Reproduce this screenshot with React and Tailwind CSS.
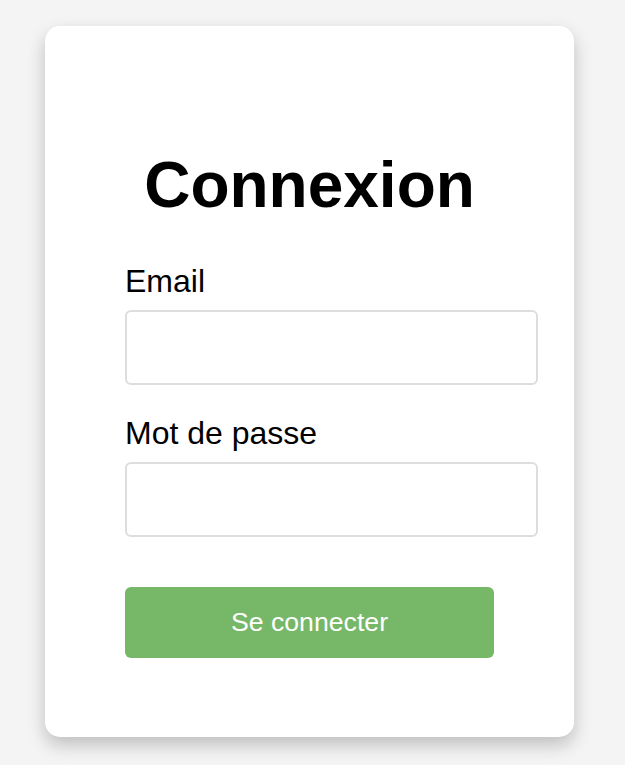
export default function App() {
  return (
    <div className="min-h-screen bg-[#f4f4f4] pt-[26px] pl-[45px] font-['Liberation_Sans',Arial,sans-serif]">
      <div className="w-[529px] bg-white rounded-[15px] shadow-[0_8px_18px_rgba(0,0,0,0.22)] px-[80px] pt-[80px] pb-[79px] flex flex-col items-start">
        <h1 className="self-stretch text-center text-[64px] font-bold text-black leading-[73.5px] mt-[43px] mb-[40.5px]">
          Connexion
        </h1>
        <label className="block text-[32px] leading-[37px] text-black">Email</label>
        <input
          type="email"
          className="mt-[10px] block h-[74.5px] w-[413px] shrink-0 rounded-[6px] border-2 border-[#dddddd] bg-white outline-none"
        />
        <label className="mt-[30px] block text-[32px] leading-[37px] text-black">Mot de passe</label>
        <input
          type="password"
          className="mt-[10.5px] block h-[74.5px] w-[413px] shrink-0 rounded-[6px] border-2 border-[#dddddd] bg-white outline-none"
        />
        <button className="mt-[50.5px] h-[71px] w-[369px] rounded-[6px] bg-[#76b768] text-[26.67px] leading-[30px] pb-[2px] text-white">
          Se connecter
        </button>
      </div>
    </div>
  );
}
